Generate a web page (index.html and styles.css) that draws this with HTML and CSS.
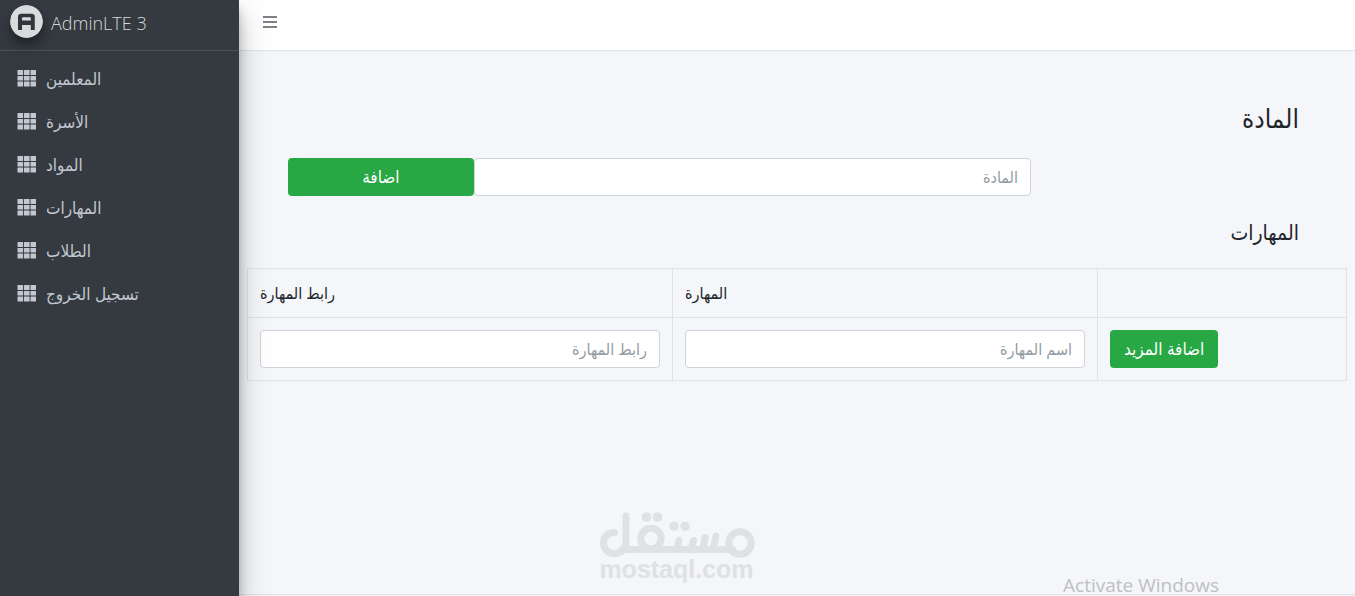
FILE: index.html
```html
<!DOCTYPE html>
<html lang="ar">
<head>
<meta charset="utf-8">
<title>AdminLTE 3</title>
<link rel="stylesheet" href="styles.css">
</head>
<body>
<svg class="defs" aria-hidden="true">
  <symbol id="grid" viewBox="0 0 20 17">
    <g fill="currentColor">
      <rect x="0.500" y="0" width="5.600" height="5" rx=".5"/><rect x="7" y="0" width="5.600" height="5" rx=".5"/><rect x="13.500" y="0" width="5.500" height="5" rx=".5"/>
      <rect x="0.500" y="6" width="5.600" height="4.600" rx=".5"/><rect x="7" y="6" width="5.600" height="4.600" rx=".5"/><rect x="13.500" y="6" width="5.500" height="4.600" rx=".5"/>
      <rect x="0.500" y="11.500" width="5.600" height="5" rx=".5"/><rect x="7" y="11.500" width="5.600" height="5" rx=".5"/><rect x="13.500" y="11.500" width="5.500" height="5" rx=".5"/>
    </g>
  </symbol>
</svg>
<div class="wrapper">
  <aside class="sidebar">
    <a class="brand" href="#">
      <svg class="brand-logo" viewBox="0 0 33 33" aria-hidden="true">
        <circle cx="16.500" cy="16.500" r="16.500" fill="#d9dadb"/>
        <path d="M8 25V12q0-3.300 3.300-3.300h10.200q3.300 0 3.300 3.300v13h-4v-5h-8.800v5zM12 15.500h8.800V13q0-.8-.8-.8h-7.200q-.8 0-.8.8z" fill="#30363c" fill-rule="evenodd"/>
      </svg>
      <span>AdminLTE 3</span>
    </a>
    <nav class="menu">
      <a href="#"><svg class="icon"><use href="#grid"/></svg><span>المعلمين</span></a>
      <a href="#"><svg class="icon"><use href="#grid"/></svg><span>الأسرة</span></a>
      <a href="#"><svg class="icon"><use href="#grid"/></svg><span>المواد</span></a>
      <a href="#"><svg class="icon"><use href="#grid"/></svg><span>المهارات</span></a>
      <a href="#"><svg class="icon"><use href="#grid"/></svg><span>الطلاب</span></a>
      <a href="#"><svg class="icon"><use href="#grid"/></svg><span>تسجيل الخروج</span></a>
    </nav>
  </aside>
  <div class="page">
    <header class="topbar">
      <button class="toggle" type="button" aria-label="القائمة">
        <svg viewBox="0 0 14 12" aria-hidden="true"><path d="M0 1h14M0 6h14M0 11h14" stroke="currentColor" stroke-width="2"/></svg>
      </button>
    </header>
    <main class="content">
      <h1 class="title"><label for="subject">المادة</label></h1>
      <form class="subject-form">
        <button class="btn" type="button">اضافة</button>
        <input class="field" id="subject" type="text" dir="rtl" placeholder="المادة">
      </form>
      <h2 class="subtitle">المهارات</h2>
      <table class="skills">
        <colgroup><col class="col-field"><col class="col-field"><col></colgroup>
        <thead>
          <tr><th id="link-head">رابط المهارة</th><th id="name-head">المهارة</th><td></td></tr>
        </thead>
        <tbody>
          <tr>
            <td><input class="field" type="text" dir="rtl" placeholder="رابط المهارة" aria-labelledby="link-head"></td>
            <td><input class="field" type="text" dir="rtl" placeholder="اسم المهارة" aria-labelledby="name-head"></td>
            <td><button class="btn" type="button">اضافة المزيد</button></td>
          </tr>
        </tbody>
      </table>
    </main>
    <footer class="footer"></footer>
  </div>
  <div class="watermark">
    <svg viewBox="0 0 156 44" aria-hidden="true">
      <g fill="none" stroke="currentColor" stroke-width="7" stroke-linecap="round" stroke-linejoin="round">
        <path d="M15.500 20.500C9 20 4.500 25 4.500 31c0 6 4.500 10.500 10.500 10.500 7 0 12-4.500 12-11V4M23 37.500H134"/>
        <circle cx="52" cy="26.500" r="10.200"/>
        <circle cx="141" cy="31" r="11.300"/>
        <path d="M78 36l2-7.500M92.500 36l2-7.500M104 36l2-10.500M114.500 36l2.500-12"/>
      </g>
      <g fill="currentColor"><circle cx="47.500" cy="5" r="4.800"/><circle cx="58.500" cy="5" r="4.800"/><circle cx="75" cy="14.300" r="4.700"/><circle cx="86" cy="14.300" r="4.700"/></g>
    </svg>
    <span>mostaql.com</span>
  </div>
  <div class="activate">Activate Windows</div>
</div>
</body>
</html>
```
FILE: styles.css
```css
* { box-sizing: border-box; }
body {
  margin: 0;
  background: #f4f6f9;
  color: #212529;
  font-family: "Noto Sans", "DejaVu Sans Condensed", "DejaVu Sans", sans-serif;
  font-size: 16px;
  line-height: 24px;
}
a { color: inherit; text-decoration: none; }
button, input { font: inherit; }
.defs { position: absolute; width: 0; height: 0; }
.wrapper { position: relative; display: flex; min-height: 100vh; overflow: hidden; }

.sidebar {
  position: relative;
  z-index: 1;
  flex: 0 0 239px;
  background: #343a40;
  color: #c2c7d0;
  box-shadow: 0 14px 28px rgba(0, 0, 0, .25), 0 10px 10px rgba(0, 0, 0, .22);
}
.brand {
  display: flex;
  align-items: center;
  gap: 8px;
  height: 51px;
  padding: 4px 10px 12px;
  border-bottom: 1px solid #4b545c;
  color: #d6d8d9;
  font-family: "Open Sans", sans-serif;
  font-size: 18px;
  font-weight: 300;
}
.brand span { padding-top: 3px; }
.brand-logo {
  width: 33px;
  height: 33px;
  border-radius: 50%;
  box-shadow: 0 10px 20px rgba(0, 0, 0, .19), 0 6px 6px rgba(0, 0, 0, .23);
}
.menu { display: grid; gap: 3px; padding: 8px; }
.menu a { display: flex; align-items: center; gap: 9px; height: 40px; padding: 0 9px; font-size: 17px; }
.icon { width: 20px; height: 17px; margin-bottom: 1px; }

.page { flex: 1; min-width: 0; display: flex; flex-direction: column; }
.topbar { height: 51px; padding: 12px 24px; background: #fff; border-bottom: 1px solid #dee2e6; }
.toggle { display: flex; padding: 4px 0; border: 0; background: none; color: #7b8187; }
.toggle svg { width: 14px; height: 12px; }
.content { flex: 1; padding: 51px 8px 24px; }
.title, .subtitle { margin: 0; padding: 0 48px; text-align: right; font-weight: 400; }
.title { font-size: 26px; line-height: 32px; }
.subtitle { font-size: 21px; line-height: 28px; }
.subject-form {
  display: grid;
  grid-template-columns: 1fr 3fr;
  max-width: 784px;
  margin: 24px 0 22px;
  padding-left: 41px;
}
.btn {
  height: 38px;
  padding: 0 14px;
  border: 0;
  border-radius: 4px;
  background: #28a745;
  color: #fff;
  font-size: 17px;
}
.field {
  display: block;
  width: 100%;
  height: 38px;
  padding: 0 12px;
  border: 1px solid #ced4da;
  border-radius: 4px;
  background: #fff;
  color: #495057;
  font-size: 16px;
}
.field::placeholder { color: #939ba2; opacity: 1; }
.skills { width: 100%; margin-top: 22px; border-collapse: collapse; table-layout: fixed; }
.col-field { width: 425px; }
.skills th, .skills td { padding: 12px; border: 1px solid #dee2e6; text-align: left; }
.skills th { font-size: 16px; font-weight: 400; }
.footer { height: 2px; border-top: 1px solid #dee2e6; background: #f4f6f9; }

.watermark {
  position: absolute;
  left: 50%;
  bottom: 14px;
  width: 156px;
  margin-left: -79px;
  color: #dfe1e3;
  text-align: center;
  font: bold 25px/26px "Liberation Sans", sans-serif;
}
.watermark svg { display: block; width: 156px; height: 44px; overflow: visible; }
.activate {
  position: absolute;
  right: 136px;
  bottom: 0;
  color: #bfc0c1;
  font: 19px/22px "Open Sans", sans-serif;
}
```
